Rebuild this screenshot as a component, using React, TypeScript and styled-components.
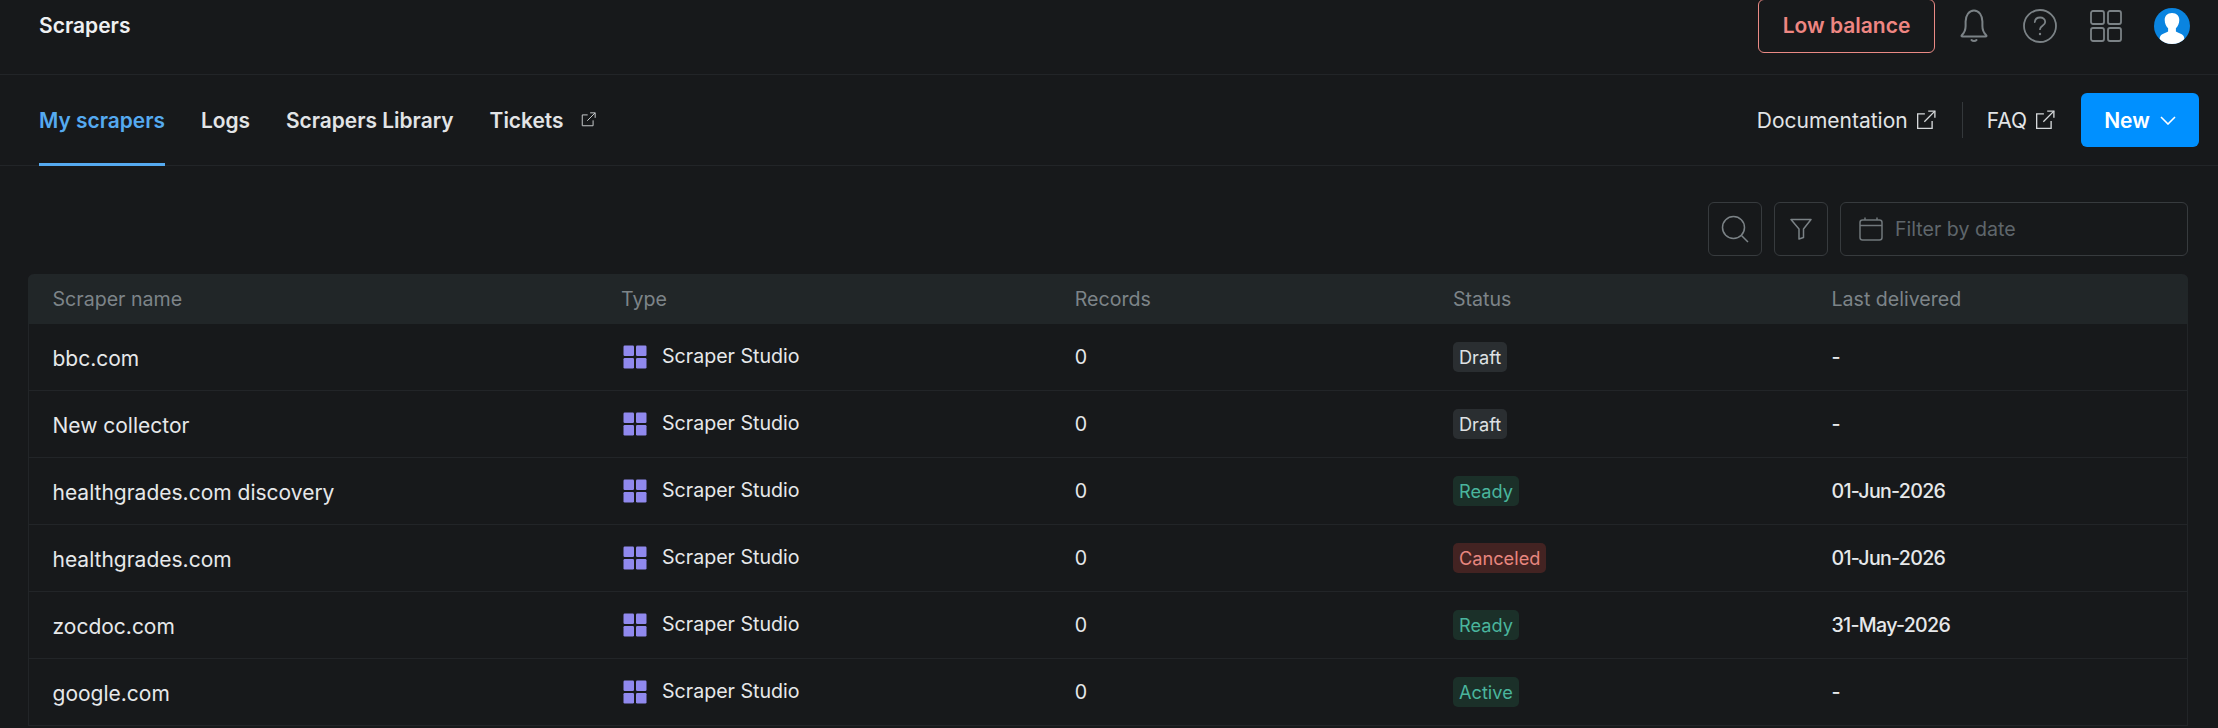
import React from "react";
import styled, { createGlobalStyle } from "styled-components";

const GlobalStyle = createGlobalStyle`
  html, body {
    margin: 0;
    background-color: #17191b;
  }
  * {
    box-sizing: border-box;
  }
`;

const rows = [
  { name: "bbc.com", status: "Draft", delivered: "-" },
  { name: "New collector", status: "Draft", delivered: "-" },
  { name: "healthgrades.com discovery", status: "Ready", delivered: "01-Jun-2026" },
  { name: "healthgrades.com", status: "Canceled", delivered: "01-Jun-2026" },
  { name: "zocdoc.com", status: "Ready", delivered: "31-May-2026" },
  { name: "google.com", status: "Active", delivered: "-" },
];

const ExternalIcon = ({ size, color }: { size: number; color: string }) => (
  <svg width={size} height={size} viewBox="0 0 18 18" fill="none" stroke={color} strokeWidth="1.2">
    <path d="M8 3.5H1.5V16.5H14.5V10" />
    <path d="M7.5 10.5L17 1" />
    <path d="M11 1H17V7" />
  </svg>
);

const BellIcon = () => (
  <svg width="30" height="34" viewBox="0 0 30 34" fill="none" stroke="#7b8286" strokeWidth="2">
    <path d="M3 26c2.5-2.5 3.6-4.6 3.6-9V12.500C6.600 6.500 10 1.500 15 1.500s8.400 5 8.400 11V17c0 4.400 1.100 6.500 3.600 9 1 1 .6 1.500-.6 1.500H3.600c-1.200 0-1.600-.5-.6-1.500z" />
    <path d="M12.500 31c1.200 1.300 3.800 1.300 5 0" strokeLinecap="round" />
  </svg>
);

const HelpIcon = () => (
  <svg width="34" height="34" viewBox="0 0 34 34" fill="none" stroke="#7b8286" strokeWidth="1.800">
    <circle cx="17" cy="17" r="16" />
    <path d="M11.800 13c.3-2.800 2.600-4.500 5.300-4.500 2.900 0 5.100 1.800 5.100 4.400 0 3.800-5.200 3.800-5.200 7.300" strokeLinecap="round" />
    <circle cx="17" cy="25" r="1.200" fill="#7b8286" stroke="none" />
  </svg>
);

const GridIcon = () => (
  <svg width="32" height="32" viewBox="0 0 32 32" fill="none" stroke="#7b8286" strokeWidth="1.800">
    <rect x="1" y="1" width="13" height="13" rx="2" />
    <rect x="18" y="1" width="13" height="13" rx="2" />
    <rect x="1" y="18" width="13" height="13" rx="2" />
    <rect x="18" y="18" width="13" height="13" rx="2" />
  </svg>
);

const AvatarIcon = () => (
  <svg width="36" height="36" viewBox="0 0 36 36">
    <defs>
      <clipPath id="avatar-clip">
        <circle cx="18" cy="18" r="18" />
      </clipPath>
    </defs>
    <circle cx="18" cy="18" r="18" fill="#0a84e0" />
    <g clipPath="url(#avatar-clip)" fill="#ffffff">
      <path d="M18 5c-4.800 0-7.300 2.900-7.300 7 0 3.400 1.500 6.400 3.400 8.200v3.300c-2.400 1.700-6.300 2.100-7.700 4.500-.6 1.100-.9 2.200-.9 8h25c0-5.800-.3-6.900-.9-8-1.400-2.400-5.300-2.800-7.700-4.500v-3.300c1.900-1.800 3.400-4.800 3.400-8.200 0-4.100-2.500-7-7.300-7z" />
    </g>
  </svg>
);

const SearchIcon = () => (
  <svg width="28" height="28" viewBox="0 0 28 28" fill="none" stroke="#7b8286" strokeWidth="1.500">
    <circle cx="12.500" cy="12.500" r="11" />
    <path d="M20.500 20.500L27 27" />
  </svg>
);

const FunnelIcon = () => (
  <svg width="22" height="22" viewBox="0 0 22 22" fill="none" stroke="#7b8286" strokeWidth="1.500" strokeLinejoin="round">
    <path d="M1 1.500H21L13.500 11V19.500L9 21V11L1 1.500z" />
  </svg>
);

const CalendarIcon = () => (
  <svg width="24" height="24" viewBox="0 0 24 24" fill="none" stroke="#70777b" strokeWidth="1.500">
    <rect x="1" y="3" width="22" height="20" rx="2.500" />
    <path d="M1 8.500H23" />
    <path d="M6 .5V3M18 .5V3" />
  </svg>
);

const StudioIcon = () => (
  <svg width="24" height="24" viewBox="0 0 24 24">
    <rect x="0.500" y="0.500" width="10.500" height="10.500" rx="1.200" fill="#9089ee" />
    <rect x="13" y="0.500" width="10.500" height="10.500" rx="1.200" fill="#9089ee" />
    <rect x="0.500" y="13" width="10.500" height="10.500" rx="1.200" fill="#9089ee" />
    <rect x="13" y="13" width="10.500" height="10.500" rx="1.200" fill="#9089ee" />
  </svg>
);

function App() {
  return (
    <Page>
      <GlobalStyle />
      <TopBar>
        <PageTitle>Scrapers</PageTitle>
        <TopActions>
          <BalanceButton>Low balance</BalanceButton>
          <IconSlot>
            <BellIcon />
          </IconSlot>
          <IconSlot>
            <HelpIcon />
          </IconSlot>
          <IconSlot>
            <GridIcon />
          </IconSlot>
          <IconSlot>
            <AvatarIcon />
          </IconSlot>
        </TopActions>
      </TopBar>

      <TabBar>
        <Tabs>
          <Tab $active>My scrapers</Tab>
          <Tab>Logs</Tab>
          <Tab>Scrapers Library</Tab>
          <Tab>
            Tickets
            <TabIcon>
              <ExternalIcon size={15} color="#c4c7c9" />
            </TabIcon>
          </Tab>
        </Tabs>
        <TabActions>
          <DocLink>
            Documentation
            <ExternalIcon size={20} color="#d5d8da" />
          </DocLink>
          <Separator />
          <DocLink>
            FAQ
            <ExternalIcon size={20} color="#d5d8da" />
          </DocLink>
          <NewButton>
            New
            <svg width="16" height="9" viewBox="0 0 16 9" fill="none" stroke="#ffffff" strokeWidth="1.600">
              <path d="M1 1l7 7 7-7" />
            </svg>
          </NewButton>
        </TabActions>
      </TabBar>

      <Content>
        <Toolbar>
          <ToolButton>
            <SearchIcon />
          </ToolButton>
          <ToolButton>
            <FunnelIcon />
          </ToolButton>
          <DateField>
            <CalendarIcon />
            <DatePlaceholder>Filter by date</DatePlaceholder>
          </DateField>
        </Toolbar>

        <Table>
          <HeadRow>
            <span>Scraper name</span>
            <span>Type</span>
            <span>Records</span>
            <span>Status</span>
            <span>Last delivered</span>
          </HeadRow>
          {rows.map((row) => (
            <BodyRow key={row.name}>
              <NameCell>{row.name}</NameCell>
              <TypeCell>
                <StudioIcon />
                <TypeLabel>Scraper Studio</TypeLabel>
              </TypeCell>
              <span>0</span>
              <span>
                <Badge $status={row.status}>{row.status}</Badge>
              </span>
              <DeliveredCell>{row.delivered}</DeliveredCell>
            </BodyRow>
          ))}
        </Table>
      </Content>
    </Page>
  );
}

const badgeColors: Record<string, { bg: string; fg: string }> = {
  Draft: { bg: "#2a2e31", fg: "#dfe2e4" },
  Ready: { bg: "#1b3029", fg: "#4ab59d" },
  Active: { bg: "#1b3029", fg: "#4ab59d" },
  Canceled: { bg: "#432322", fg: "#e8867f" },
};

const Page = styled.div`
  height: 728px;
  overflow: hidden;
  background-color: #17191b;
  color: #e6e8ea;
  font-family: Inter, "Liberation Sans", sans-serif;
`;
const TopBar = styled.header`
  display: flex;
  justify-content: space-between;
  align-items: center;
  height: 75px;
  padding: 0 28px 23px 39px;
  border-bottom: 1px solid #222528;
`;
const PageTitle = styled.div`
  font-size: 21px;
  font-weight: 600;
  color: #eef0f2;
`;
const TopActions = styled.div`
  display: flex;
  align-items: center;
  gap: 30px;
`;
const BalanceButton = styled.div`
  display: flex;
  align-items: center;
  justify-content: center;
  width: 177px;
  height: 54px;
  margin-right: -9px;
  border: 1px solid #ea8a85;
  border-radius: 6px;
  font-size: 21px;
  font-weight: 600;
  color: #ee8682;
`;
const IconSlot = styled.div`
  display: flex;
  align-items: center;
  justify-content: center;
  width: 36px;
  height: 36px;
`;
const TabBar = styled.nav`
  display: flex;
  justify-content: space-between;
  align-items: center;
  height: 91px;
  padding: 0 19px 0 39px;
  border-bottom: 1px solid #222528;
`;
const Tabs = styled.div`
  display: flex;
  align-self: stretch;
  gap: 36px;
`;
const Tab = styled.div<{ $active?: boolean }>`
  display: flex;
  align-items: center;
  gap: 18px;
  margin-bottom: -1px;
  padding-top: 2px;
  font-size: 20.9px;
  font-weight: 600;
  color: ${(p) => (p.$active ? "#55aaf0" : "#e2e4e6")};
  border-bottom: 3px solid ${(p) => (p.$active ? "#55aaf0" : "transparent")};
`;
const TabIcon = styled.span`
  display: flex;
  margin-top: -2px;
`;
const TabActions = styled.div`
  display: flex;
  align-items: center;
`;
const DocLink = styled.div`
  display: flex;
  align-items: center;
  gap: 8px;
  font-size: 21px;
  color: #e2e4e6;
`;
const Separator = styled.div`
  width: 1px;
  height: 36px;
  margin: 0 24px 0 26px;
  background-color: #34383b;
`;
const NewButton = styled.div`
  display: flex;
  align-items: center;
  justify-content: center;
  gap: 10px;
  width: 118px;
  height: 54px;
  margin-left: 26px;
  border-radius: 6px;
  background-color: #0090ff;
  font-size: 21px;
  font-weight: 600;
  color: #ffffff;
`;
const Content = styled.main`
  padding: 36px 30px 0 28px;
`;
const Toolbar = styled.div`
  display: flex;
  justify-content: flex-end;
  gap: 12px;
  margin-bottom: 18px;
`;
const ToolButton = styled.div`
  display: flex;
  align-items: center;
  justify-content: center;
  width: 54px;
  height: 54px;
  border: 1px solid #373b3e;
  border-radius: 6px;
`;
const DateField = styled.div`
  display: flex;
  align-items: center;
  gap: 12px;
  width: 348px;
  height: 54px;
  padding-left: 18px;
  border: 1px solid #373b3e;
  border-radius: 6px;
`;
const DatePlaceholder = styled.span`
  font-size: 19.6px;
  color: #5f666b;
`;
const Table = styled.section`
  border: solid #222528;
  border-width: 0 1px;
  border-radius: 6px 6px 0 0;
`;
const gridColumns = "568.5px 453.7px 378.3px 378.5px 1fr";
const HeadRow = styled.div`
  display: grid;
  grid-template-columns: ${gridColumns};
  align-items: center;
  height: 50px;
  margin: 0 -1px;
  padding-left: 24.5px;
  border-radius: 6px 6px 0 0;
  background-color: #212628;
  font-size: 19.6px;
  color: #7d8488;
`;
const BodyRow = styled.div`
  display: grid;
  grid-template-columns: ${gridColumns};
  align-items: center;
  height: 67px;
  padding-left: 23.5px;
  border-bottom: 1px solid #222528;
  font-size: 19.6px;
  color: #e6e8ea;
`;
const NameCell = styled.span`
  padding-top: 2px;
  font-size: 21px;
`;
const TypeCell = styled.span`
  display: flex;
  align-items: center;
  gap: 15px;
  padding-left: 2px;
`;
const TypeLabel = styled.span`
  margin-top: -2px;
`;
const Badge = styled.span<{ $status: string }>`
  display: inline-flex;
  align-items: center;
  height: 30px;
  padding: 0 6px;
  border-radius: 5px;
  font-size: 18.2px;
  background-color: ${(p) => badgeColors[p.$status].bg};
  color: ${(p) => badgeColors[p.$status].fg};
`;
const DeliveredCell = styled.span`
  font-size: 19.6px;
  font-weight: 500;
  letter-spacing: -0.7px;
`;

export default App;
